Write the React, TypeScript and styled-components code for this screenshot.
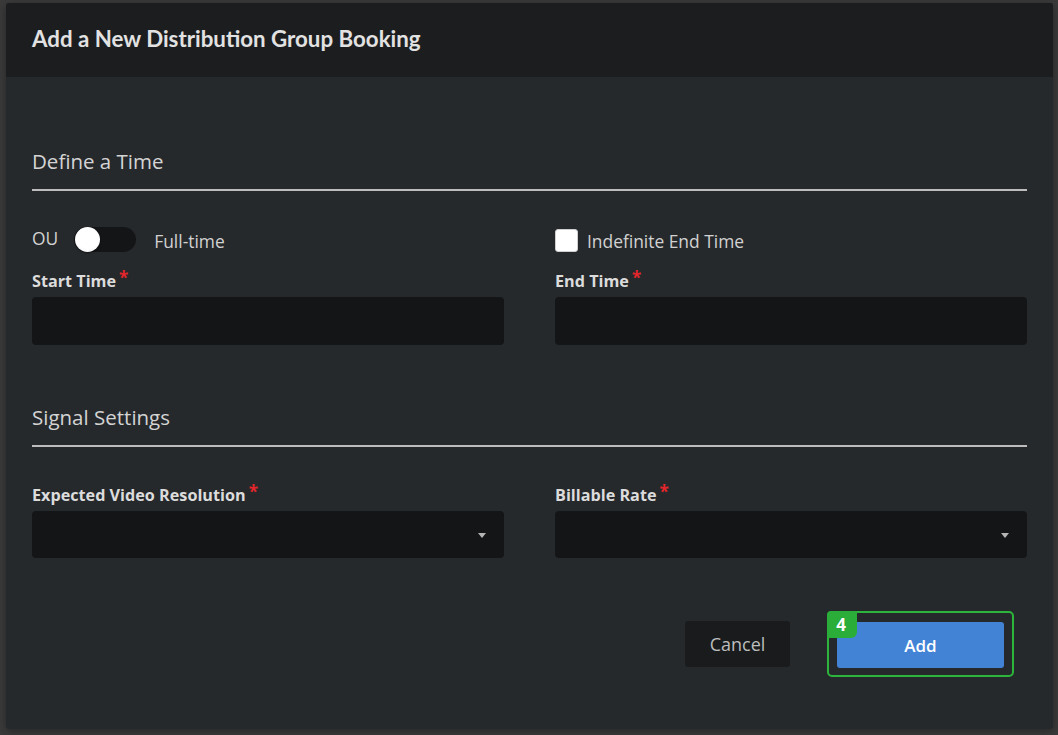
import React from "react";
import styled, { createGlobalStyle } from "styled-components";

const GlobalStyle = createGlobalStyle`
  html, body {
    margin: 0;
    padding: 0;
    background: #3a3a3a;
  }
  * { box-sizing: border-box; }
`;

const Backdrop = styled.div`
  width: 1058px;
  height: 735px;
  padding: 3px 5px 6px 6px;
  background: #3a3a3a;
  overflow: hidden;
`;

const Modal = styled.div`
  width: 1047px;
  height: 726px;
  background: #26292c;
  border-radius: 3px;
  overflow: hidden;
  display: flex;
  flex-direction: column;
  box-shadow: 0 2px 8px rgba(0, 0, 0, 0.35);
`;

const Header = styled.header`
  height: 74px;
  flex: none;
  display: flex;
  align-items: center;
  padding: 0 26px 2px 26px;
  background: #1c1d1f;
`;

const Title = styled.h1`
  margin: 0;
  font-family: Lato, "Open Sans", sans-serif;
  font-weight: 700;
  font-size: 22.3px;
  line-height: 28px;
  color: #e2e2e2;
`;

const Body = styled.div`
  display: flex;
  flex-direction: column;
  padding: 0 26px;
  font-family: "Open Sans", "Noto Sans", sans-serif;
`;

const SectionHeading = styled.h2<{ $top: number; $bottom: number }>`
  margin: ${(p) => p.$top}px 0 0 0;
  padding-bottom: ${(p) => p.$bottom}px;
  border-bottom: 2px solid #bdbdbd;
  font-size: 20.5px;
  line-height: 24px;
  font-weight: 400;
  color: #d4d4d4;
`;

const Grid = styled.div<{ $top: number }>`
  display: grid;
  grid-template-columns: 472px 472px;
  column-gap: 51px;
  margin-top: ${(p) => p.$top}px;
`;

const Field = styled.div`
  display: flex;
  flex-direction: column;
`;

const OptionRow = styled.div`
  display: flex;
  align-items: center;
  height: 25px;
  margin-bottom: 19px;
`;

const OptionText = styled.span<{ $shift?: number }>`
  font-size: 17.4px;
  line-height: 24px;
  color: #d2d2d2;
  position: relative;
  top: ${(p) => p.$shift ?? 0}px;
`;

const Switch = styled.div`
  width: 62px;
  height: 25px;
  margin: 0 18px 0 16px;
  border-radius: 13px;
  background: #141517;
  display: flex;
  align-items: center;
  padding-left: 1px;
`;

const Knob = styled.div`
  width: 25px;
  height: 25px;
  border-radius: 50%;
  background: radial-gradient(circle at 50% 40%, #ffffff 60%, #e6e6e6 100%);
  box-shadow: 0 1px 2px rgba(0, 0, 0, 0.5);
`;

const Checkbox = styled.div`
  width: 23px;
  height: 23px;
  margin: 2px 9px 0 0;
  border-radius: 3px;
  background: #ffffff;
  border: 1px solid #cfcfcf;
`;

const Label = styled.label`
  display: flex;
  align-items: flex-start;
  font-size: 16.2px;
  line-height: 20px;
  font-weight: 700;
  color: #dcdcdc;
  margin-bottom: 6px;
`;

const Required = styled.span`
  color: #e2262b;
  font-size: 17px;
  line-height: 12px;
  margin-left: 3px;
  margin-top: 1px;
`;

const Input = styled.div<{ $h: number }>`
  height: ${(p) => p.$h}px;
  background: #141517;
  border-radius: 4px;
  display: flex;
  align-items: center;
  justify-content: flex-end;
  padding-right: 18px;
`;

const Caret = styled.span`
  width: 0;
  height: 0;
  border-left: 4.5px solid transparent;
  border-right: 4.5px solid transparent;
  border-top: 5px solid #b5b5b5;
  margin-top: 2px;
`;

const Footer = styled.div`
  display: flex;
  justify-content: flex-end;
  align-items: center;
  margin-top: 53px;
  padding-right: 13px;
  gap: 37px;
`;

const Button = styled.button<{ $primary?: boolean }>`
  height: 46px;
  border: none;
  border-radius: 3px;
  padding: 0;
  font-family: "Open Sans", "Noto Sans", sans-serif;
  font-size: ${(p) => (p.$primary ? 17 : 18)}px;
  font-weight: ${(p) => (p.$primary ? 600 : 400)};
  color: ${(p) => (p.$primary ? "#ffffff" : "#bdbdbd")};
  background: ${(p) => (p.$primary ? "#4283d6" : "#191b1d")};
  width: ${(p) => (p.$primary ? 167 : 105)}px;
  cursor: pointer;
`;

const Highlight = styled.div`
  position: relative;
  display: flex;
  padding: 9px 8px 7px 8px;
  border: 2px solid #2cb53b;
  border-radius: 5px;
`;

const Badge = styled.span`
  position: absolute;
  left: -2px;
  top: -2px;
  width: 30px;
  height: 27px;
  background: #2aad39;
  border-radius: 4px 0 6px 0;
  color: #ffffff;
  font-family: "Open Sans", "Noto Sans", sans-serif;
  font-weight: 700;
  font-size: 17px;
  line-height: 27px;
  text-align: center;
  padding-right: 2px;
`;

export default function App() {
  return (
    <>
      <GlobalStyle />
      <Backdrop>
        <Modal>
          <Header>
            <Title>Add a New Distribution Group Booking</Title>
          </Header>
          <Body>
            <SectionHeading $top={72} $bottom={16}>
              Define a Time
            </SectionHeading>
            <Grid $top={36}>
              <Field>
                <OptionRow>
                  <OptionText $shift={-2}>OU</OptionText>
                  <Switch>
                    <Knob />
                  </Switch>
                  <OptionText $shift={1}>Full-time</OptionText>
                </OptionRow>
                <Label>
                  Start Time<Required>*</Required>
                </Label>
                <Input $h={48} />
              </Field>
              <Field>
                <OptionRow>
                  <Checkbox />
                  <OptionText $shift={1}>Indefinite End Time</OptionText>
                </OptionRow>
                <Label>
                  End Time<Required>*</Required>
                </Label>
                <Input $h={48} />
              </Field>
            </Grid>

            <SectionHeading $top={60} $bottom={16}>
              Signal Settings
            </SectionHeading>
            <Grid $top={38}>
              <Field>
                <Label>
                  Expected Video Resolution<Required>*</Required>
                </Label>
                <Input $h={47}>
                  <Caret />
                </Input>
              </Field>
              <Field>
                <Label>
                  Billable Rate<Required>*</Required>
                </Label>
                <Input $h={47}>
                  <Caret />
                </Input>
              </Field>
            </Grid>

            <Footer>
              <Button>Cancel</Button>
              <Highlight>
                <Badge>4</Badge>
                <Button $primary>Add</Button>
              </Highlight>
            </Footer>
          </Body>
        </Modal>
      </Backdrop>
    </>
  );
}
